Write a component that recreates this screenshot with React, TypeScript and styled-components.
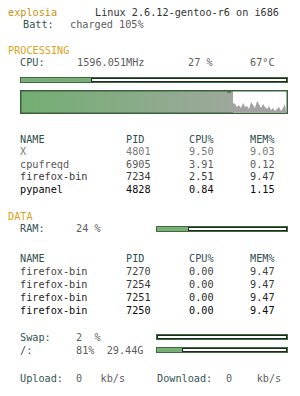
import React from "react";
import styled, { createGlobalStyle } from "styled-components";

const Global = createGlobalStyle`
  html, body { margin: 0; padding: 0; background: #ffffff; }
  body { font-family: "DejaVu Sans Mono", "Liberation Mono", monospace; }
`;

const Panel = styled.div`
  width: 300px;
  height: 396px;
  box-sizing: border-box;
  padding-top: 6.5px;
  font-family: "DejaVu Sans Mono", "Liberation Mono", monospace;
  font-size: 10.2px;
  color: #555;
  overflow: hidden;
`;

const Line = styled.div<{ $indent?: number; $h?: number; $mt?: number }>`
  display: flex;
  align-items: center;
  height: ${(p) => p.$h ?? 12.5}px;
  line-height: ${(p) => p.$h ?? 12.5}px;
  padding-left: ${(p) => p.$indent ?? 20}px;
  margin-top: ${(p) => p.$mt ?? 0}px;
  white-space: pre;
`;

const Cell = styled.span<{ $w?: number; $c?: string }>`
  display: inline-block;
  flex: none;
  width: ${(p) => (p.$w ? `${p.$w}px` : "auto")};
  color: ${(p) => p.$c ?? "#5a5a5a"};
`;

const Heading = styled.div<{ $mt?: number }>`
  height: 12.5px;
  line-height: 12.5px;
  padding-left: 8px;
  margin-top: ${(p) => p.$mt ?? 0}px;
  color: #dca21a;
`;

const Track = styled.div<{ $w: number; $mt?: number; $ml?: number }>`
  display: flex;
  box-sizing: border-box;
  width: ${(p) => p.$w}px;
  height: 6px;
  margin-top: ${(p) => p.$mt ?? 0}px;
  margin-left: ${(p) => p.$ml ?? 0}px;
  border: 1px solid #3f6a41;
  background: #78b077;
  flex: none;
`;

const Fill = styled.div`
  flex: none;
  height: 100%;
`;

const Empty = styled.div`
  flex: 1;
  box-sizing: border-box;
  height: 100%;
  background: #ffffff;
  border: 1px solid #1f2a1f;
`;

const Bar: React.FC<{ pct: number; w: number; mt?: number; ml?: number }> = ({ pct, w, mt, ml }) => (
  <Track $w={w} $mt={mt} $ml={ml}>
    <Fill style={{ width: `${pct}%` }} />
    <Empty />
  </Track>
);

const GraphBox = styled.div`
  margin: 7px 0 0 20px;
  width: 268px;
  height: 24px;
`;

const Graph: React.FC = () => {
  const spikes = [
    [213, 13], [215, 14], [217, 17], [219, 15], [221, 18], [223, 13], [225, 17],
    [227, 16], [229, 19], [231, 12], [233, 15], [235, 18], [237, 11], [239, 14], [241, 18],
    [243, 14], [245, 17], [247, 19], [249, 16], [251, 20], [253, 18], [255, 21], [257, 19],
    [259, 17], [261, 21], [263, 18], [265, 14], [266, 22],
  ];
  const pts = `213,22 ${spikes.map(([x, y]) => `${x},${y}`).join(" ")}`;
  return (
    <GraphBox>
      <svg width="268" height="24" viewBox="0 0 268 24">
        <defs>
          <linearGradient id="g" x1="0" x2="1" y1="0" y2="0">
            <stop offset="0" stopColor="#72ae72" />
            <stop offset="1" stopColor="#9ea89c" />
          </linearGradient>
        </defs>
        <rect x="0" y="0" width="268" height="24" fill="#ffffff" />
        <rect x="1" y="1" width="212" height="22" fill="url(#g)" />
        <rect x="207" y="1" width="4" height="2" fill="#6e7a6c" />
        <polygon points={pts} fill="#a3a3a3" />
        <rect x="0.75" y="0.75" width="266.5" height="22.5" fill="none" stroke="#3d603f" strokeWidth="1.5" />
      </svg>
    </GraphBox>
  );
};

type Row = { name: string; pid: string; cpu: string; mem: string; c: string };

const COLS = [106, 63, 61];

const ProcTable: React.FC<{ rows: Row[]; h: number; mt: number }> = ({ rows, h, mt }) => (
  <div>
    <Line $h={h} $mt={mt}>
      <Cell $w={COLS[0]} $c="#2f4f50">NAME</Cell>
      <Cell $w={COLS[1]} $c="#2f4f50">PID</Cell>
      <Cell $w={COLS[2]} $c="#2f4f50">CPU%</Cell>
      <Cell $c="#2f4f50">MEM%</Cell>
    </Line>
    {rows.map((r, i) => (
      <Line key={i} $h={h}>
        <Cell $w={COLS[0]} $c={r.c}>{r.name}</Cell>
        <Cell $w={COLS[1]} $c={r.c}>{r.pid}</Cell>
        <Cell $w={COLS[2]} $c={r.c}>{r.cpu}</Cell>
        <Cell $c={r.c}>{r.mem}</Cell>
      </Line>
    ))}
  </div>
);

const LABEL = "#335555";
const VALUE = "#5e5e5e";

const topRows: Row[] = [
  { name: "X", pid: "4801", cpu: "9.50", mem: "9.03", c: "#7a7a7a" },
  { name: "cpufreqd", pid: "6905", cpu: "3.91", mem: "0.12", c: "#5a5a5a" },
  { name: "firefox-bin", pid: "7234", cpu: "2.51", mem: "9.47", c: "#3a3a3a" },
  { name: "pypanel", pid: "4828", cpu: "0.84", mem: "1.15", c: "#0a0a0a" },
];

const memRows: Row[] = [
  { name: "firefox-bin", pid: "7270", cpu: "0.00", mem: "9.47", c: "#444444" },
  { name: "firefox-bin", pid: "7254", cpu: "0.00", mem: "9.47", c: "#363636" },
  { name: "firefox-bin", pid: "7251", cpu: "0.00", mem: "9.47", c: "#262626" },
  { name: "firefox-bin", pid: "7250", cpu: "0.00", mem: "9.47", c: "#0a0a0a" },
];

export default function App() {
  return (
    <>
      <Global />
      <Panel>
        <Line $indent={8}>
          <Cell $w={87} $c="#c8920e">explosia</Cell>
          <Cell $c="#333333">Linux 2.6.12-gentoo-r6 on i686</Cell>
        </Line>
        <Line $indent={23}>
          <Cell $w={47} $c={LABEL}>Batt:</Cell>
          <Cell $c={VALUE}>charged 105%</Cell>
        </Line>

        <Heading $mt={13}>PROCESSING</Heading>
        <Line>
          <Cell $w={57} $c={LABEL}>CPU:</Cell>
          <Cell $w={111} $c={VALUE}>1596.051MHz</Cell>
          <Cell $w={62} $c={VALUE}>27 %</Cell>
          <Cell $c={VALUE}>67°C</Cell>
        </Line>
        <Bar pct={26.5} w={268} mt={7.5} ml={20} />
        <Graph />

        <ProcTable rows={topRows} h={12.5} mt={19.5} />

        <Heading $mt={14.5}>DATA</Heading>
        <Line>
          <Cell $w={56} $c={LABEL}>RAM:</Cell>
          <Cell $w={80} $c={VALUE}>24 %</Cell>
          <Bar pct={24} w={132} />
        </Line>

        <ProcTable rows={memRows} h={13} mt={16} />

        <Line $h={13} $mt={14}>
          <Cell $w={56} $c={LABEL}>Swap:</Cell>
          <Cell $w={80} $c={VALUE}>2  %</Cell>
          <Bar pct={0} w={132} />
        </Line>
        <Line $h={13}>
          <Cell $w={56} $c={LABEL}>/:</Cell>
          <Cell $w={80} $c={VALUE}>81%  29.44G</Cell>
          <Bar pct={19} w={132} />
        </Line>

        <Line $mt={16}>
          <Cell $w={56} $c={LABEL}>Upload:</Cell>
          <Cell $w={81} $c={VALUE}>0   kb/s</Cell>
          <Cell $w={69} $c={LABEL}>Download:</Cell>
          <Cell $c={VALUE}>0    kb/s</Cell>
        </Line>
      </Panel>
    </>
  );
}
